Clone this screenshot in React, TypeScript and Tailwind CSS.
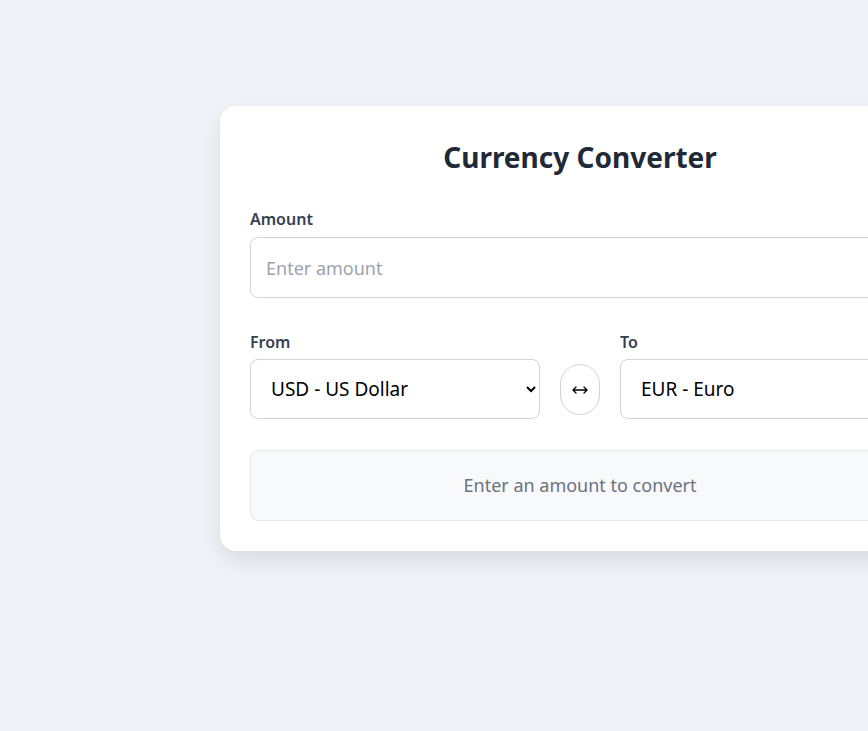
import React from "react";

export default function App() {
  return (
    <div
      className="w-[868px] h-[731px] overflow-hidden bg-[#f0f3f7] pt-[106px] pl-[220px]"
      style={{ fontFamily: '"Noto Sans", "Open Sans", sans-serif' }}
    >
      <div className="w-[720px] shrink-0 bg-white rounded-2xl p-[30px] shadow-[0_10px_25px_rgba(0,0,0,0.1)]">
        <h1 className="text-center text-[28px] leading-[42px] font-bold text-[#1f2937] mb-[29px]">
          Currency Converter
        </h1>
        <div className="mb-[32px]">
          <label className="block text-[16px] leading-[24px] font-semibold text-[#374151] mb-[6px]">
            Amount
          </label>
          <input
            type="text"
            placeholder="Enter amount"
            className="w-full h-[61px] px-[15px] border border-[#d1d5db] rounded-lg text-[18px] text-[#1f2937] placeholder:text-[#9ca3af] outline-none"
          />
        </div>
        <div className="flex items-end gap-[20px] mb-[31px]">
          <div className="flex-1">
            <label className="block text-[16px] leading-[24px] font-semibold text-[#374151] mb-[5px]">
              From
            </label>
            <select className="w-full h-[60px] px-[16px] border border-[#d1d5db] rounded-lg text-[19px] text-black bg-white">
              <option>USD - US Dollar</option>
            </select>
          </div>
          <button className="w-[40px] h-[51px] mb-[4px] rounded-full border border-[#d1d5db] bg-white text-black flex items-center justify-center">
            <svg width="16" height="8" viewBox="0 0 16 8" fill="none" stroke="#000" strokeWidth="1.3" strokeLinecap="round" strokeLinejoin="round">
              <path d="M1 4H15M4 1L1 4L4 7M12 1L15 4L12 7" />
            </svg>
          </button>
          <div className="flex-1">
            <label className="block text-[16px] leading-[24px] font-semibold text-[#374151] mb-[5px]">
              To
            </label>
            <select className="w-full h-[60px] px-[16px] border border-[#d1d5db] rounded-lg text-[19px] text-black bg-white">
              <option>EUR - Euro</option>
            </select>
          </div>
        </div>
        <div className="h-[71px] bg-[#f8f9fa] border border-[#e5e7eb] rounded-lg flex items-center justify-center text-[18px] text-[#6b7280]">
          Enter an amount to convert
        </div>
      </div>
    </div>
  );
}
